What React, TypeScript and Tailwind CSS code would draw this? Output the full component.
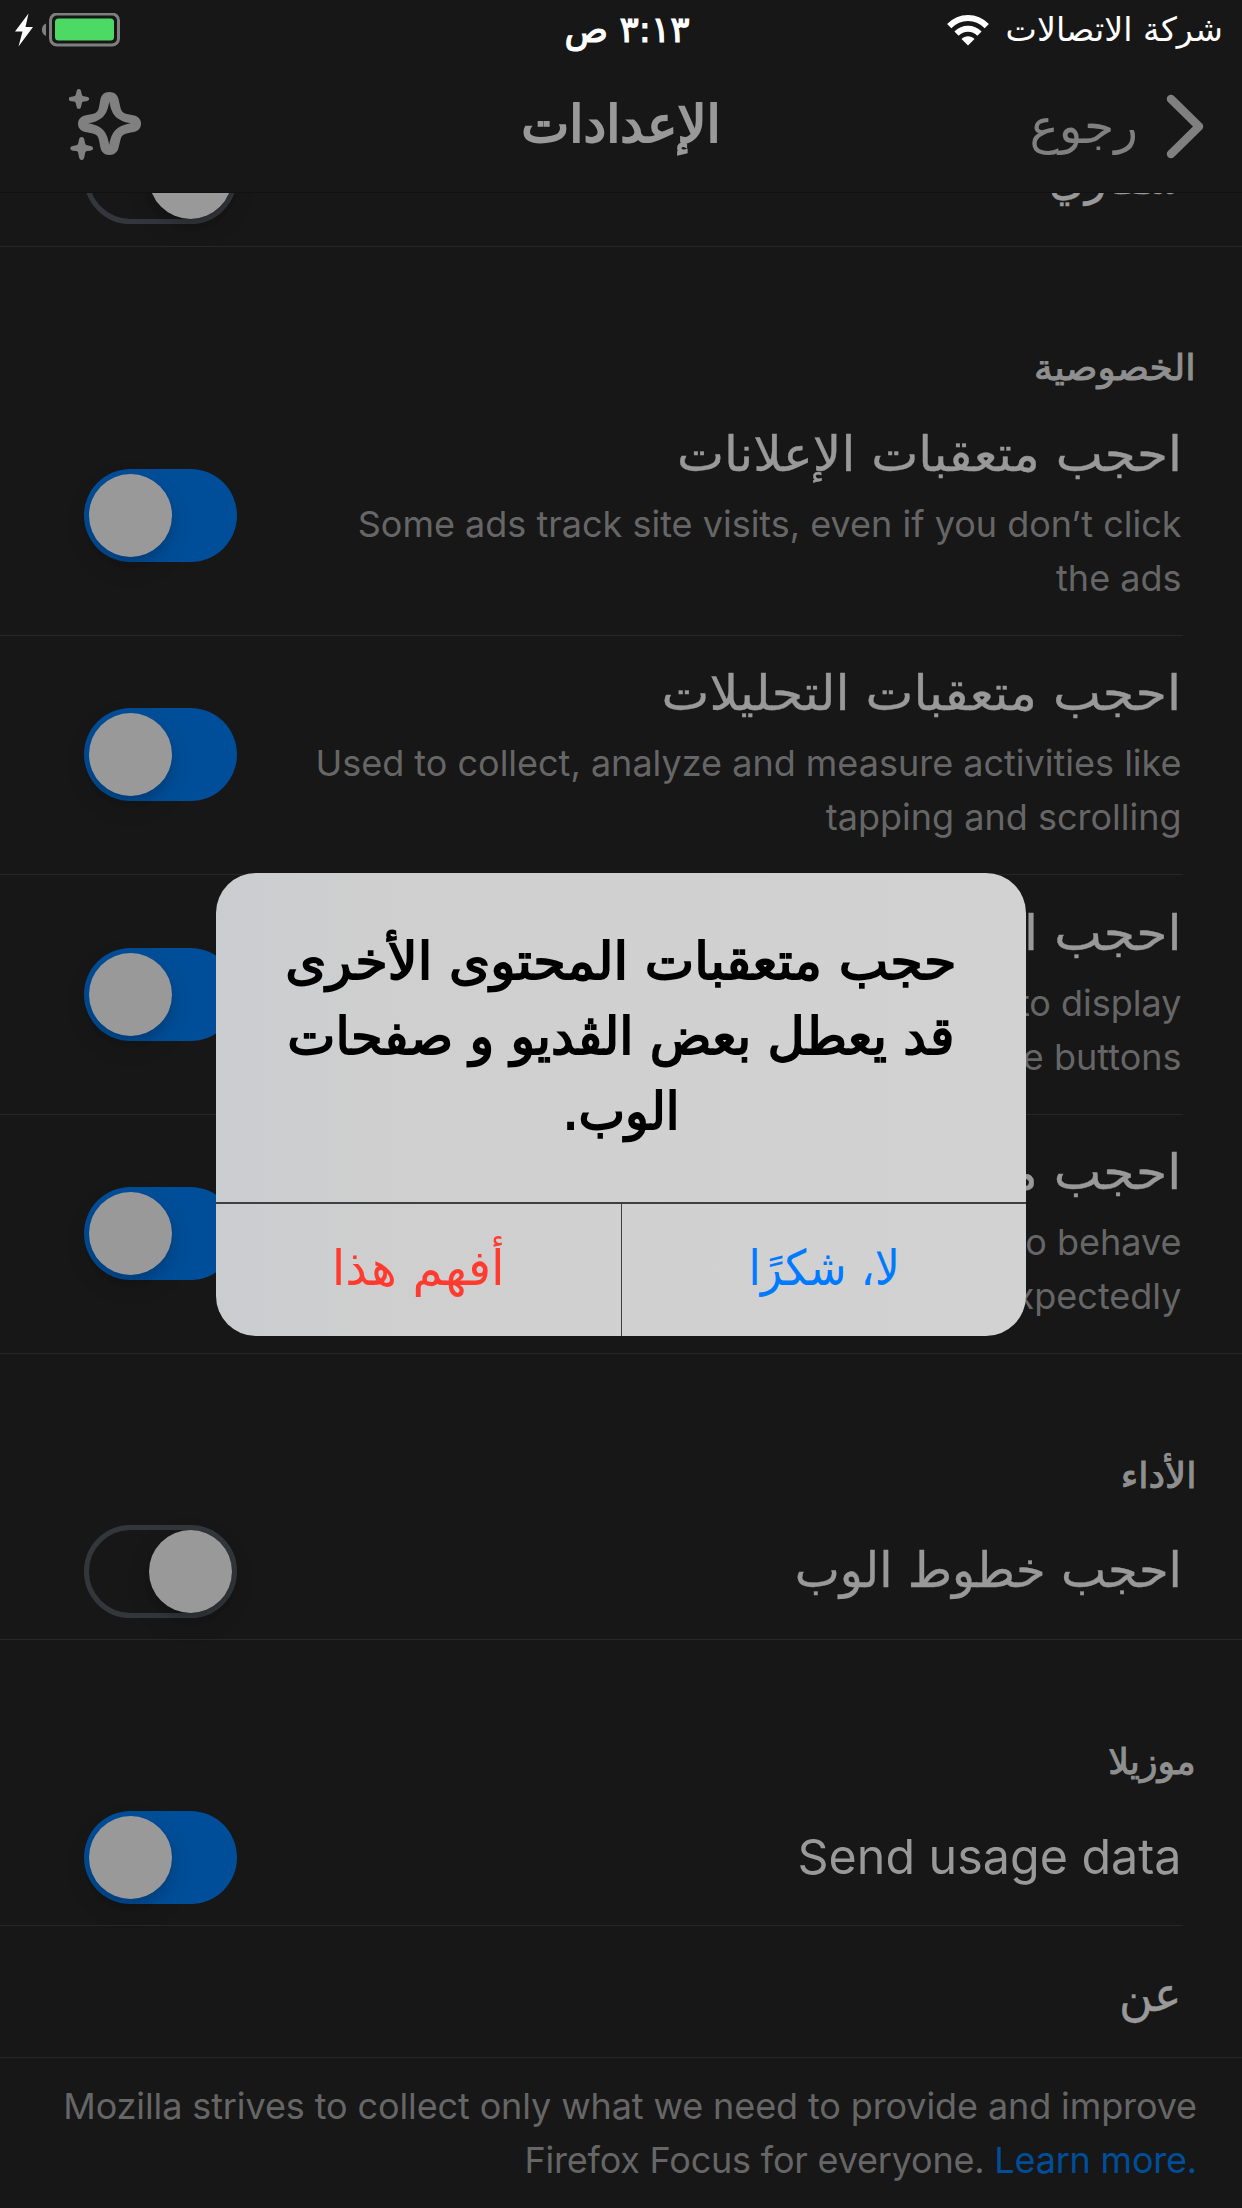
import type { ReactNode } from "react";

const arabic = "font-['DejaVu_Sans',sans-serif]";
const latin = "font-['Inter',sans-serif]";

function Toggle({ on }: { on?: boolean }) {
  return (
    <div
      dir="ltr"
      className={
        "mb-[2px] flex h-[93px] w-[153px] shrink-0 items-center overflow-visible rounded-full " +
        (on ? "justify-start bg-[#004e99] pl-[5px]" : "justify-end border-[5px] border-[#33373c]")
      }
    >
      <div className="size-[83px] rounded-full bg-[#999] shadow-[0_9px_24px_rgba(0,0,0,0.15),0_6px_6px_rgba(0,0,0,0.08)]" />
    </div>
  );
}

function Row({
  height,
  last,
  children,
  on,
  toggle = true,
  pad = "pb-[2px]",
}: {
  height: string;
  last?: boolean;
  children: ReactNode;
  on?: boolean;
  toggle?: boolean;
  pad?: string;
}) {
  return (
    <div className={"pr-[59px] " + height}>
      <div className="relative flex h-full items-center justify-between pl-[84px]">
        <div className={"flex flex-col pr-[1.500px] " + pad}>{children}</div>
        {toggle && <Toggle on={on} />}
        <div
          className={
            "absolute bottom-0 left-0 h-px bg-[#272727] " + (last ? "-right-[59px]" : "right-0")
          }
        />
      </div>
    </div>
  );
}

function Title({ children, scale = "" }: { children: string; scale?: string }) {
  return (
    <div
      className={`${arabic} origin-right whitespace-nowrap text-[49px] leading-[70px] text-[#999] [-webkit-text-stroke:0.400px_#999] ${scale}`}
    >
      {children}
    </div>
  );
}

function Detail({ lines }: { lines: string[] }) {
  return (
    <div dir="ltr" className={`${latin} mt-[7px] text-right text-[36px] leading-[54px] text-[#666]`}>
      {lines.map((line) => (
        <div key={line} className="whitespace-nowrap">
          {line}
        </div>
      ))}
    </div>
  );
}

function SectionHeader({ children, height, scale = "" }: { children: string; height: string; scale?: string }) {
  return (
    <div className={`flex items-end pr-[46px] ${height}`}>
      <div
        className={`${arabic} origin-right pb-[4px] text-[36px] leading-[48px] text-[#8f8f8f] [-webkit-text-stroke:1px_#8f8f8f] ${scale}`}
      >
        {children}
      </div>
    </div>
  );
}

function StatusBar() {
  return (
    <div className="grid h-[60px] grid-cols-[1fr_auto_1fr] items-center text-white">
      <div className="flex items-center gap-[17px] pr-[19px]">
        <div className={`${arabic} text-[33.3px] leading-[60px]`}>شركة الاتصالات</div>
        <svg width="42" height="31" viewBox="0 0 42 31" fill="none" stroke="#fff" strokeWidth="6">
          <path d="M2.200 11.200C13 .4 29 .4 39.800 11.200" />
          <path d="M9.500 18.600c6.500-6.400 16.500-6.400 23 0" />
          <path d="M21 30.500l-6.500-6.600c3.700-3.400 9.300-3.400 13 0z" fill="#fff" stroke="none" />
        </svg>
      </div>
      <div className={`${arabic} translate-x-[6px] text-[36px] leading-[60px] [-webkit-text-stroke:1.2px_#fff]`}>
        ٣:١٣ ص
      </div>
      <div dir="ltr" className="flex items-center pl-[15px]">
        <svg width="106" height="34" viewBox="15 13.500 106 34">
          <path d="M28.500 14L15 32h7.500L18.500 47 33 27.500h-7.500z" fill="#fff" />
          <path d="M46 24v12.500c-5.500-2-5.500-10.500 0-12.500z" fill="#7f7f7f" />
          <rect x="50.500" y="14.500" width="68" height="31" rx="6.500" fill="none" stroke="#7f7f7f" strokeWidth="3" />
          <rect x="55" y="19" width="59" height="22" rx="3.500" fill="#4cd964" />
        </svg>
      </div>
    </div>
  );
}

function NavBar() {
  return (
    <div className="grid h-[133px] shrink-0 grid-cols-[1fr_auto_1fr] border-b border-[#111] text-[#808080]">
      <div className="flex items-start pr-[38px] pt-[34px]">
        <svg width="38" height="65" viewBox="0 0 38 65" fill="none" stroke="currentColor" strokeWidth="8.500" strokeLinecap="round" strokeLinejoin="round">
          <path d="M5 5l28 27.500L5 60" />
        </svg>
        <div className={`${arabic} mr-[28px] mt-[1px] text-[49px] leading-[64px]`}>رجوع</div>
      </div>
      <div className={`${arabic} pt-[33px] text-[51px] leading-[64px] text-[#999] [-webkit-text-stroke:2px_#999]`}>
        الإعدادات
      </div>
      <div dir="ltr" className="flex items-start pl-[69px] pt-[29px]">
        <svg width="72" height="71" viewBox="207 267 216 213" fill="#808080">
          <path
            fillRule="evenodd"
            d="M328 276c16 0 25 9 28 23l5 22c2 11 6 17 16 20l19 4c18 3 27 12 27 26s-9 23-27 26l-19 4c-10 3-14 9-16 20l-5 21c-3 14-12 23-28 23s-24-9-27-23l-4-21c-2-11-6-17-16-20l-20-4c-18-3-27-12-27-26s9-23 27-26l20-4c10-3 14-9 16-20l4-22c3-14 11-23 27-23zM328 305c-7 38-18 56-63 65 45 9 56 27 63 65 7-38 18-56 65-65-47-9-58-27-65-65z"
          />
          <path d="M236.500 267c5 0 6 3 7 8l2 8c1 4 2 5 6 6l8 1c5 1 8 2 8 6.500s-3 6-8 7l-8 1c-4 1-5 2-6 6l-2 8c-1 5-2 8-7 8s-6-3-7-8l-2-8c-1-4-2-5-6-6l-8-1c-5-1-7-2-7-7s2-5.500 7-6.500l8-1c4-1 5-2 6-6l2-8c1-5 2-8 7-8z" />
          <path d="M245 411c5 0 7 3 8 8l2 9c1 5 2 7 7 8l9 2c5 1 8 2 8 7s-3 6-8 7l-9 1c-5 1-6 3-7 8l-2 10c-1 5-3 9-8 9s-7-4-8-9l-2-10c-1-5-2-7-7-8l-9-1c-5-1-8-2-8-7s3-6 8-7l9-2c5-1 6-3 7-8l2-9c1-5 3-8 8-8z" />
        </svg>
      </div>
    </div>
  );
}

function Dialog() {
  return (
    <div className="absolute left-[216px] top-[873px] flex h-[463px] w-[810px] flex-col overflow-hidden rounded-[40px] bg-linear-to-r from-[#cacdd0] via-[#cfcfcf] via-20% to-[#d2d2d2]">
      <div
        className={`${arabic} flex h-[329px] flex-col items-center whitespace-nowrap pt-[51px] text-[51px] leading-[75px] text-black [-webkit-text-stroke:1.8px_#000]`}
      >
        <div className="scale-x-[1.03]">حجب متعقبات المحتوى الأخرى</div>
        <div className="scale-x-[1.002]">قد يعطل بعض الڤديو و صفحات</div>
        <div className="scale-x-[0.97]">الوب.</div>
      </div>
      <div className={`${arabic} flex grow border-t-2 border-[#3d3f41] text-[49px] leading-[130px]`}>
        <div className="flex-1 text-center text-[#007aff]">
          <div className="scale-x-[0.9]">لا، شكرًا</div>
        </div>
        <div className="flex-1 border-r border-[#3d3f41] text-center text-[#ff3b30]">أفهم هذا</div>
      </div>
    </div>
  );
}

export default function App() {
  return (
    <div dir="rtl" className="relative flex h-[2208px] w-[1242px] flex-col overflow-hidden bg-[#171717]">
      <StatusBar />
      <NavBar />
      <div className="flex h-[54px] flex-col justify-end overflow-hidden">
        <Row height="h-[137px] shrink-0" last>
          <Title scale="scale-x-[0.93]">سفاري</Title>
        </Row>
      </div>

      <SectionHeader height="h-[149px]" scale="scale-x-[1.045]">الخصوصية</SectionHeader>
      <Row height="h-[240px]" on pad="pb-[8px]">
        <Title scale="scale-x-[1.02]">احجب متعقبات الإعلانات</Title>
        <Detail lines={["Some ads track site visits, even if you don’t click", "the ads"]} />
      </Row>
      <Row height="h-[239px]" on pad="pb-[8px]">
        <Title scale="scale-x-[1.036]">احجب متعقبات التحليلات</Title>
        <Detail lines={["Used to collect, analyze and measure activities like", "tapping and scrolling"]} />
      </Row>
      <Row height="h-[240px]" on pad="pb-[8px]">
        <Title scale="scale-x-[1.03]">احجب المتعقبات الاجتماعية</Title>
        <Detail lines={["Embedded for tracking visits and to display", "functionality like share buttons"]} />
      </Row>
      <Row height="h-[239px]" on last pad="pb-[8px]">
        <Title scale="scale-x-[1.03]">احجب متعقبات المحتوى الأخرى</Title>
        <Detail lines={["May cause some videos and pages to behave", "unexpectedly"]} />
      </Row>

      <SectionHeader height="h-[150px]" scale="scale-x-[1.03]">الأداء</SectionHeader>
      <Row height="h-[136px]" last>
        <Title scale="scale-x-[0.978]">احجب خطوط الوب</Title>
      </Row>

      <SectionHeader height="h-[150px]" scale="scale-x-[1.01]">موزيلا</SectionHeader>
      <Row height="h-[136px]" on>
        <div dir="ltr" className={`${latin} text-[48.4px] leading-[70px] text-[#999]`}>
          Send usage data
        </div>
      </Row>
      <Row height="h-[132px]" toggle={false} last pad="pt-[5px]">
        <Title scale="scale-x-[0.94]">عن</Title>
      </Row>

      <div
        dir="ltr"
        className={`${latin} whitespace-nowrap pr-[45px] pt-[21px] text-right text-[36px] leading-[54px] tracking-[-0.11px] text-[#666]`}
      >
        <div>Mozilla strives to collect only what we need to provide and improve</div>
        <div className="tracking-[-0.2px]">
          Firefox Focus for everyone. <span className="text-[#004e99]">Learn more.</span>
        </div>
      </div>

      <Dialog />
    </div>
  );
}
